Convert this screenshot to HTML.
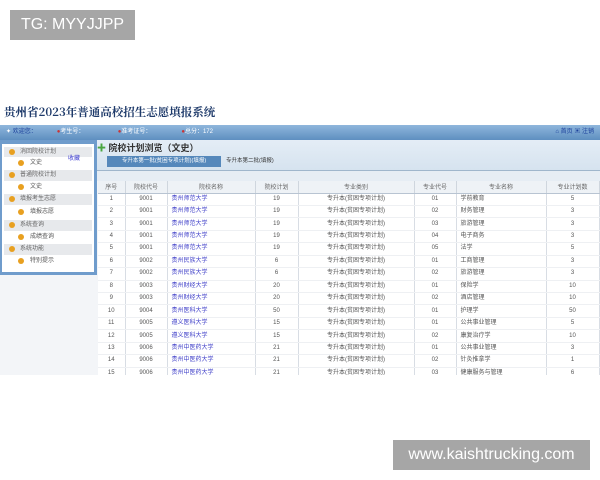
<!DOCTYPE html><html><head><meta charset="utf-8"><style>
*{margin:0;padding:0;box-sizing:border-box}
body{width:600px;height:480px;background:#fff;position:relative;overflow:hidden;font-family:"Liberation Sans","Noto Sans CJK SC",sans-serif}
.abs{position:absolute}
.wm{background:#a6a6a6;color:#fff;font-size:16px;line-height:30px;text-align:center}
table{border-collapse:collapse;font-size:6px;color:#555;table-layout:fixed}
td{height:12.45px;line-height:11px;text-align:center;vertical-align:middle;border-right:1px solid #d8dde4;border-bottom:1px solid #eef0f3;padding:0}
th{height:12px;font-weight:normal;color:#666;background:#eef2f6;border-right:1px solid #cfd6de;border-bottom:1px solid #b8c4d2}
td.l{text-align:left;padding-left:4px}
td.n{color:#3e3ec8}
.sh{position:absolute;left:4px;width:88px;height:11px;background:#e7e9ec;font-size:6px;color:#666;line-height:11px;padding-left:16px}
.si{position:absolute;left:4px;width:88px;height:13px;background:#fff;font-size:6px;color:#555;line-height:13px;padding-left:26px}
.dot{position:absolute;width:6px;height:6px;border-radius:50%;background:#e8a020;top:3px}
</style></head><body>
<div class="abs wm" style="left:10px;top:10px;width:125px">TG: MYYJJPP</div>
<div class="abs" style="left:0;top:100px;width:600px;height:275px;background:#f3f5f8"></div>
<div class="abs" style="left:0;top:100px;width:600px;height:25px;background:#fff;font-family:'Noto Serif CJK SC','Liberation Serif',serif;font-weight:bold;font-size:11.5px;color:#1e3a6a;line-height:25px;padding-left:4px">贵州省2023年普通高校招生志愿填报系统</div>
<div class="abs" style="left:0;top:125px;width:600px;height:15px;background:linear-gradient(#8fb6dc,#5e8fc0);font-size:6px;color:#fff;line-height:15px;padding-left:6px;white-space:nowrap">✦ <span style="color:#1a3f9a">欢迎您：</span>&nbsp;&nbsp;&nbsp;&nbsp;&nbsp;&nbsp;&nbsp;&nbsp;&nbsp;&nbsp;&nbsp;&nbsp;<span style="color:#c33">●</span>考生号：&nbsp;&nbsp;&nbsp;&nbsp;&nbsp;&nbsp;&nbsp;&nbsp;&nbsp;&nbsp;&nbsp;&nbsp;&nbsp;&nbsp;&nbsp;&nbsp;&nbsp;&nbsp;&nbsp;&nbsp;<span style="color:#c33">●</span>准考证号：&nbsp;&nbsp;&nbsp;&nbsp;&nbsp;&nbsp;&nbsp;&nbsp;&nbsp;&nbsp;&nbsp;&nbsp;&nbsp;&nbsp;&nbsp;&nbsp;&nbsp;&nbsp;<span style="color:#c33">●</span>总分：172<span style="position:absolute;right:6px;color:#1a3f9a">⌂ 首页 ▣ 注销</span></div>
<div class="abs" style="left:0;top:140px;width:97px;height:135px;background:#6f9ccc"></div>
<div class="abs" style="left:2px;top:144px;width:92px;height:128px;background:#fff"></div>
<div class="sh" style="top:147px"><span class="dot" style="left:5px;top:2px"></span>消回院校计划</div>
<div class="si" style="top:157px"><span class="dot" style="left:14px"></span>文史<span style="position:absolute;left:64px;top:-4px;color:#3b3bd0">收藏</span></div>
<div class="sh" style="top:170px"><span class="dot" style="left:5px;top:2px"></span>普通院校计划</div>
<div class="si" style="top:181px"><span class="dot" style="left:14px"></span>文史</div>
<div class="sh" style="top:194px"><span class="dot" style="left:5px;top:2px"></span>填报考生志愿</div>
<div class="si" style="top:206px"><span class="dot" style="left:14px"></span>填报志愿</div>
<div class="sh" style="top:220px"><span class="dot" style="left:5px;top:2px"></span>系统查询</div>
<div class="si" style="top:231px"><span class="dot" style="left:14px"></span>成绩查询</div>
<div class="sh" style="top:244px"><span class="dot" style="left:5px;top:2px"></span>系统功能</div>
<div class="si" style="top:255px"><span class="dot" style="left:14px"></span>特别提示</div>
<div class="abs" style="left:97px;top:140px;width:503px;height:31px;background:linear-gradient(#e4edf6,#d6e3ef);border-bottom:1px solid #9fb6cc"></div>
<div class="abs" style="left:97px;top:142px;font-size:9px;font-weight:bold;color:#333;line-height:12px"><span style="color:#4aa640">✚</span> 院校计划浏览（文史）</div>
<div class="abs" style="left:107px;top:156px;width:114px;height:11px;background:#5588bb;color:#fff;font-size:5.5px;line-height:11px;text-align:center">专升本第一批(贫困专项计划)(填报)</div>
<div class="abs" style="left:226px;top:156px;font-size:5.5px;line-height:11px;color:#333">专升本第二批(填报)</div>
<div class="abs" style="left:97px;top:171px;width:503px;height:10px;background:#e6edf4"></div>
<table class="abs" style="left:98px;top:181px;width:501px;background:#fff">
<colgroup><col style="width:27px"><col style="width:42px"><col style="width:88px"><col style="width:43px"><col style="width:116px"><col style="width:42px"><col style="width:90px"><col style="width:53px"></colgroup>
<tr><th>序号</th><th>院校代号</th><th>院校名称</th><th>院校计划</th><th>专业类别</th><th>专业代号</th><th>专业名称</th><th>专业计划数</th></tr>
<tr><td>1</td><td>9001</td><td class="l n">贵州师范大学</td><td>19</td><td>专升本(贫困专项计划)</td><td>01</td><td class="l">学前教育</td><td>5</td></tr>
<tr><td>2</td><td>9001</td><td class="l n">贵州师范大学</td><td>19</td><td>专升本(贫困专项计划)</td><td>02</td><td class="l">财务管理</td><td>3</td></tr>
<tr><td>3</td><td>9001</td><td class="l n">贵州师范大学</td><td>19</td><td>专升本(贫困专项计划)</td><td>03</td><td class="l">旅游管理</td><td>3</td></tr>
<tr><td>4</td><td>9001</td><td class="l n">贵州师范大学</td><td>19</td><td>专升本(贫困专项计划)</td><td>04</td><td class="l">电子商务</td><td>3</td></tr>
<tr><td>5</td><td>9001</td><td class="l n">贵州师范大学</td><td>19</td><td>专升本(贫困专项计划)</td><td>05</td><td class="l">法学</td><td>5</td></tr>
<tr><td>6</td><td>9002</td><td class="l n">贵州民族大学</td><td>6</td><td>专升本(贫困专项计划)</td><td>01</td><td class="l">工商管理</td><td>3</td></tr>
<tr><td>7</td><td>9002</td><td class="l n">贵州民族大学</td><td>6</td><td>专升本(贫困专项计划)</td><td>02</td><td class="l">旅游管理</td><td>3</td></tr>
<tr><td>8</td><td>9003</td><td class="l n">贵州财经大学</td><td>20</td><td>专升本(贫困专项计划)</td><td>01</td><td class="l">保险学</td><td>10</td></tr>
<tr><td>9</td><td>9003</td><td class="l n">贵州财经大学</td><td>20</td><td>专升本(贫困专项计划)</td><td>02</td><td class="l">酒店管理</td><td>10</td></tr>
<tr><td>10</td><td>9004</td><td class="l n">贵州医科大学</td><td>50</td><td>专升本(贫困专项计划)</td><td>01</td><td class="l">护理学</td><td>50</td></tr>
<tr><td>11</td><td>9005</td><td class="l n">遵义医科大学</td><td>15</td><td>专升本(贫困专项计划)</td><td>01</td><td class="l">公共事业管理</td><td>5</td></tr>
<tr><td>12</td><td>9005</td><td class="l n">遵义医科大学</td><td>15</td><td>专升本(贫困专项计划)</td><td>02</td><td class="l">康复治疗学</td><td>10</td></tr>
<tr><td>13</td><td>9006</td><td class="l n">贵州中医药大学</td><td>21</td><td>专升本(贫困专项计划)</td><td>01</td><td class="l">公共事业管理</td><td>3</td></tr>
<tr><td>14</td><td>9006</td><td class="l n">贵州中医药大学</td><td>21</td><td>专升本(贫困专项计划)</td><td>02</td><td class="l">针灸推拿学</td><td>1</td></tr>
<tr><td>15</td><td>9006</td><td class="l n">贵州中医药大学</td><td>21</td><td>专升本(贫困专项计划)</td><td>03</td><td class="l">健康服务与管理</td><td>6</td></tr>
</table>
<div class="abs" style="left:0;top:375px;width:600px;height:105px;background:#fff"></div>
<div class="abs wm" style="left:393px;top:440px;width:197px">www.kaishtrucking.com</div>
</body></html>
